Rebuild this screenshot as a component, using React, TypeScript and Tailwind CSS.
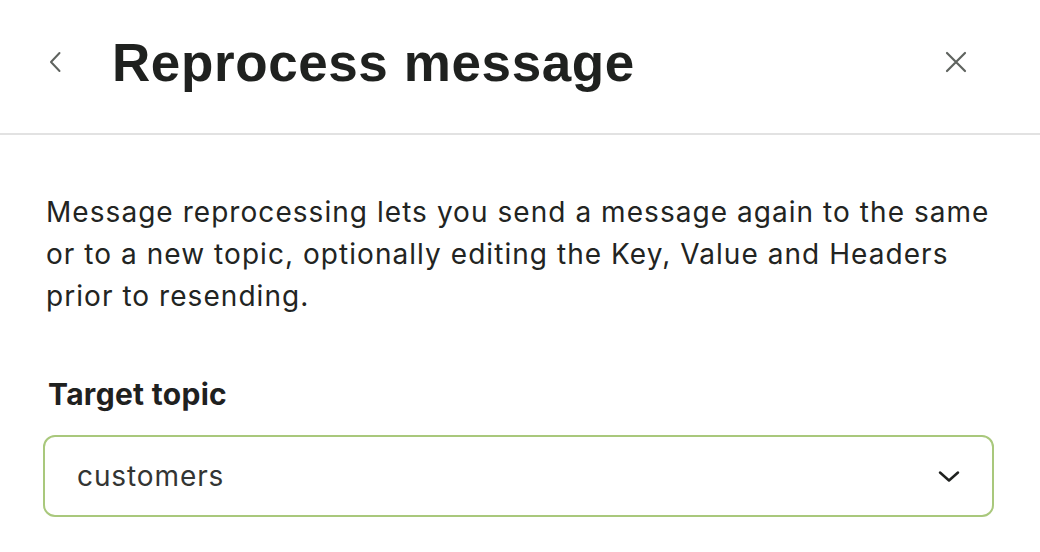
import React from 'react';

const App: React.FC = () => {
  return (
    <div className="w-[1040px] h-[552px] bg-white overflow-hidden font-['Inter','Liberation_Sans',sans-serif]">
      {/* Header */}
      <div className="h-[135px] flex items-center border-b-2 border-[#e2e2e2] pl-[48px] pr-[72px] pb-[10px]">
        <button className="w-[14px] h-[22px] flex items-center justify-center text-[#5f635f]">
          <svg width="14" height="22" viewBox="0 0 14 22" fill="none">
            <path d="M11.5 2 L3 11 L11.5 20" stroke="currentColor" strokeWidth="2" strokeLinecap="round" strokeLinejoin="round" />
          </svg>
        </button>
        <h1 className="ml-[50px] mt-[2px] font-['Liberation_Sans',Arial,sans-serif] text-[53px] font-bold tracking-[0.6px] text-[#1f211f] leading-none">
          Reprocess message
        </h1>
        <button className="ml-auto w-[24px] h-[24px] flex items-center justify-center text-[#5f635f]">
          <svg width="22" height="22" viewBox="0 0 22 22" fill="none">
            <path d="M2 2 L20 20 M20 2 L2 20" stroke="currentColor" strokeWidth="2.2" strokeLinecap="round" />
          </svg>
        </button>
      </div>

      {/* Body */}
      <div className="px-[46px] pt-[56px]">
        <p className="text-[28px] leading-[42px] tracking-[1.05px] text-[#222422]">
          Message reprocessing lets you send a message again to the same or to a new topic, optionally editing the Key, Value and Headers prior to resending.
        </p>

        <label className="block mt-[62px] ml-[2px] text-[30px] font-bold tracking-[0.3px] text-[#1f211f] leading-none">
          Target topic
        </label>

        <div className="mt-[26px] -ml-[3px] w-[951px] h-[82px] rounded-[12px] border-2 border-[#a9c87c] flex items-center pl-[32px] pr-[32px]">
          <span className="text-[28px] tracking-[0.9px] text-[#333533]">customers</span>
          <svg className="ml-auto text-[#1f211f]" width="22" height="13" viewBox="0 0 22 13" fill="none">
            <path d="M2 2.5 L11 10.5 L20 2.5" stroke="currentColor" strokeWidth="2.5" strokeLinecap="round" strokeLinejoin="round" />
          </svg>
        </div>
      </div>
    </div>
  );
};

export default App;
